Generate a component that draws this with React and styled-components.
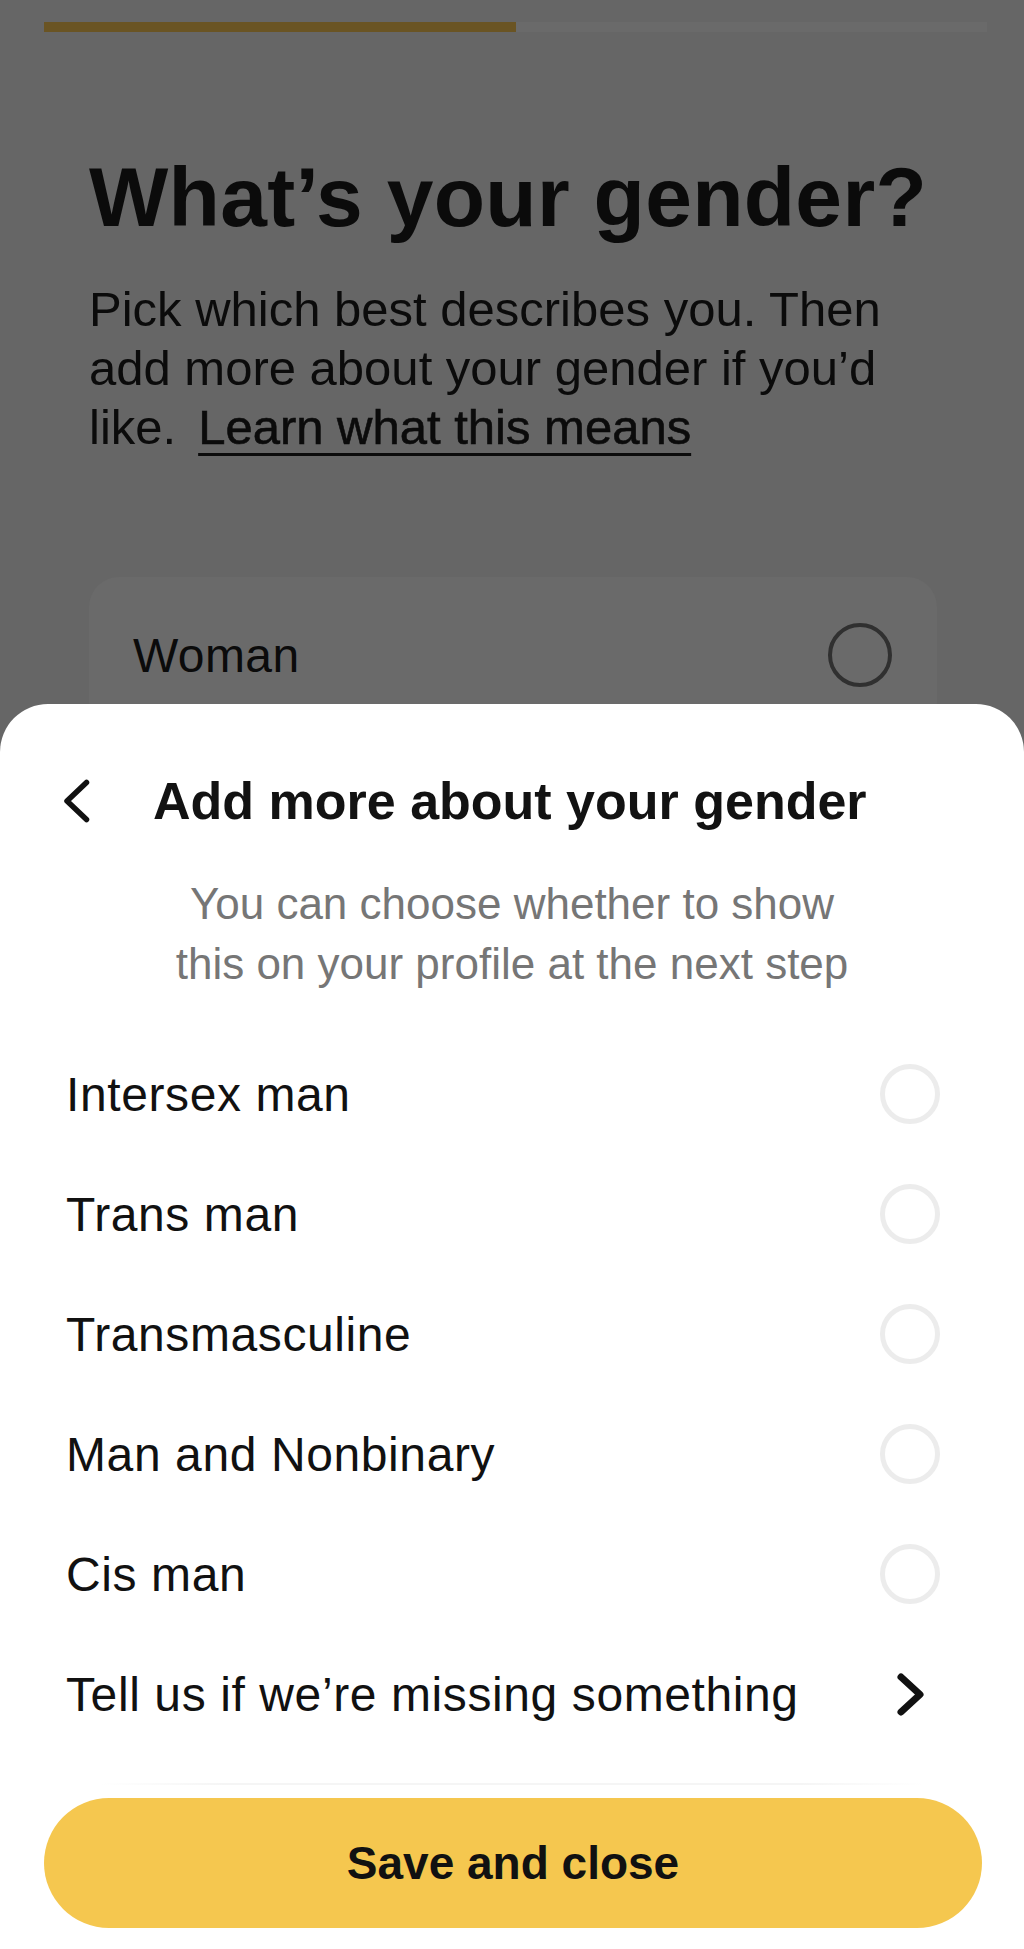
import React from 'react';
import styled, { createGlobalStyle } from 'styled-components';

const GlobalStyle = createGlobalStyle`
  * { box-sizing: border-box; }
  body {
    margin: 0;
    background: #666666;
    font-family: "Liberation Sans", Arial, sans-serif;
    -webkit-font-smoothing: antialiased;
  }
`;

const Screen = styled.div`
  position: relative;
  width: 1024px;
  height: 1949px;
  overflow: hidden;
  background: #666666;
`;

// dimmed page behind the sheet
const Progress = styled.div`
  margin: 22px 37px 0 44px;
  height: 10px;
  background: #6a6a6a;
`;

const ProgressFill = styled.div`
  height: 100%;
  background: #6a5423;
`;

const Content = styled.div`
  padding: 115px 87px 0 89px;
`;

const Title = styled.h1`
  margin: 0;
  font-size: 84px;
  line-height: 100px;
  font-weight: 700;
  color: #0b0b0b;
  letter-spacing: 0.3px;
`;

const Lead = styled.p`
  margin: 33px 0 0;
  width: 846px;
  font-size: 49px;
  line-height: 59px;
  color: #0b0b0b;
`;

const LearnLink = styled.a`
  display: inline-block;
  margin-left: 22px;
  line-height: 59px;
  color: #0b0b0b;
  text-decoration: underline;
  text-decoration-thickness: 3px;
  text-underline-offset: 9px;
  -webkit-text-stroke: 0.6px #0b0b0b;
`;

const ChoiceCard = styled.div`
  margin-top: 120px;
  width: 848px;
  height: 156px;
  border-radius: 30px;
  background: #6a6a6a;
  display: flex;
  align-items: center;
  justify-content: space-between;
  padding: 0 45px 0 44px;
  font-size: 48px;
  letter-spacing: 0.4px;
  color: #0b0b0b;
`;

const Radio = styled.span`
  flex: none;
  width: ${p => (p.$dim ? 64 : 60)}px;
  height: ${p => (p.$dim ? 64 : 60)}px;
  border-radius: 50%;
  border: ${p => (p.$dim ? '4px solid #303030' : '5px solid #ececec')};
`;

// bottom sheet
const Sheet = styled.div`
  position: absolute;
  top: 704px;
  left: 0;
  right: 0;
  bottom: 0;
  background: #ffffff;
  border-radius: 48px 48px 0 0;
  display: flex;
  flex-direction: column;
  padding-top: 67px;
`;

const SheetHeader = styled.div`
  display: flex;
  align-items: center;
  height: 60px;
  padding-left: 63px;
  gap: 63px;
`;

const SheetTitle = styled.h2`
  margin: 0;
  font-size: 52px;
  line-height: 60px;
  font-weight: 700;
  color: #121212;
`;

const SheetNote = styled.p`
  margin: 43px auto 0;
  max-width: 700px;
  text-align: center;
  font-size: 44px;
  line-height: 60px;
  color: #767676;
`;

const OptionList = styled.div`
  margin-top: 40px;
  display: flex;
  flex-direction: column;
`;

const OptionRow = styled.div`
  height: 120px;
  display: flex;
  align-items: center;
  justify-content: space-between;
  padding: 0 84px 0 66px;
  font-size: 48px;
  letter-spacing: 0.6px;
  color: #111111;
`;

const IconSlot = styled.span`
  width: 60px;
  display: flex;
  justify-content: center;
`;

const Footer = styled.div`
  margin-top: 29px;
  display: flex;
  flex-direction: column;
`;

const Fade = styled.div`
  height: 2px;
  margin: 0 100px;
  background: linear-gradient(90deg, rgba(245,245,245,0), #f5f5f5 15%, #f5f5f5 85%, rgba(245,245,245,0));
`;

const SaveButton = styled.button`
  margin: 13px 42px 0 44px;
  height: 130px;
  border: none;
  border-radius: 65px;
  background: #f5c74f;
  font-family: inherit;
  font-size: 46px;
  font-weight: 700;
  color: #111111;
`;

const BackIcon = () => (
  <svg width="27" height="44" viewBox="0 0 27 44" fill="none">
    <path d="M23.5 3.5 L4 22 L23.5 40.5" stroke="#111" strokeWidth="5.5" strokeLinecap="round" strokeLinejoin="round" />
  </svg>
);

const NextIcon = () => (
  <svg width="29" height="45" viewBox="0 0 29 45" fill="none">
    <path d="M5 5 L24 22.5 L5 40" stroke="#111" strokeWidth="7" strokeLinecap="round" strokeLinejoin="round" />
  </svg>
);

const options = [
  { label: 'Intersex man' },
  { label: 'Trans man' },
  { label: 'Transmasculine' },
  { label: 'Man and Nonbinary' },
  { label: 'Cis man' },
  { label: 'Tell us if we’re missing something', more: true },
];

export default function App() {
  const progress = 50;

  return (
    <Screen>
      <GlobalStyle />
      <Progress>
        <ProgressFill style={{ width: `${progress}%` }} />
      </Progress>
      <Content>
        <Title>What’s your gender?</Title>
        <Lead>
          Pick which best describes you. Then add more about your gender if you’d like.
          <LearnLink>Learn what this means</LearnLink>
        </Lead>
        <ChoiceCard>
          <span>Woman</span>
          <Radio $dim />
        </ChoiceCard>
      </Content>

      <Sheet>
        <SheetHeader>
          <BackIcon />
          <SheetTitle>Add more about your gender</SheetTitle>
        </SheetHeader>
        <SheetNote>You can choose whether to show this on your profile at the next step</SheetNote>
        <OptionList>
          {options.map(o => (
            <OptionRow key={o.label}>
              <span>{o.label}</span>
              <IconSlot>{o.more ? <NextIcon /> : <Radio />}</IconSlot>
            </OptionRow>
          ))}
        </OptionList>
        <Footer>
          <Fade />
          <SaveButton>Save and close</SaveButton>
        </Footer>
      </Sheet>
    </Screen>
  );
}
